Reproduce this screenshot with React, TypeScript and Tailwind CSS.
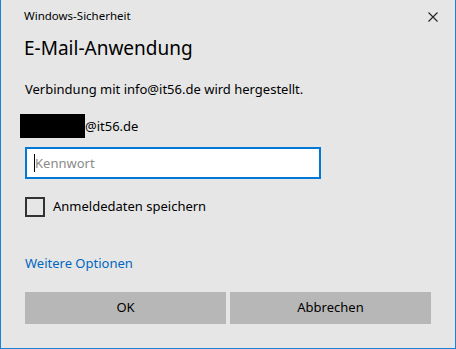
import React from "react";

export default function App() {
  return (
    <div className="w-[456px] h-[349px] bg-[#e6e6e6] border-x border-b border-[#1883d7] flex flex-col font-['Noto_Sans',sans-serif] text-[#000]">
      <div className="flex items-start justify-between pl-[23px] pr-[17px] pt-[8px]">
        <span className="text-[11.5px] leading-[16px]">Windows-Sicherheit</span>
        <svg width="10" height="10" viewBox="0 0 10 10" className="mt-[4px]">
          <path d="M0.5 0.5 L9.5 9.5 M9.5 0.5 L0.5 9.5" stroke="#222" strokeWidth="1.1" fill="none" />
        </svg>
      </div>
      <div className="pl-[23px] mt-[12px] text-[19px] leading-[24px]">E-Mail-Anwendung</div>
      <div className="pl-[24px] mt-[19px] text-[13px] leading-[20px]">
        Verbindung mit info@it56.de wird hergestellt.
      </div>
      <div className="pl-[19px] mt-[15px] flex items-center">
        <div className="w-[65px] h-[24px] bg-black" />
        <span className="text-[13px] leading-[20px]">@it56.de</span>
      </div>
      <div className="pl-[24px] mt-[9px]">
        <div className="w-[296px] h-[32px] border-2 border-[#0078d7] bg-white flex items-center pl-[7px]">
          <div className="w-px h-[18px] bg-black" />
          <span className="text-[13px] leading-[20px] text-[#8a8a8a]">Kennwort</span>
        </div>
      </div>
      <div className="pl-[24px] mt-[18px] flex items-center gap-[8px]">
        <div className="w-[20px] h-[20px] border-2 border-[#333]" />
        <span className="text-[13px] leading-[20px] -mt-[2px]">Anmeldedaten speichern</span>
      </div>
      <div className="pl-[24px] mt-[36px] text-[13px] leading-[20px] text-[#0067c0]">Weitere Optionen</div>
      <div className="pl-[24px] mt-[19px] flex gap-[4px]">
        <div className="w-[201px] h-[32px] bg-[#b7b7b7] flex items-center justify-center text-[13px]">OK</div>
        <div className="w-[201px] h-[32px] bg-[#b7b7b7] flex items-center justify-center text-[13px]">Abbrechen</div>
      </div>
    </div>
  );
}
